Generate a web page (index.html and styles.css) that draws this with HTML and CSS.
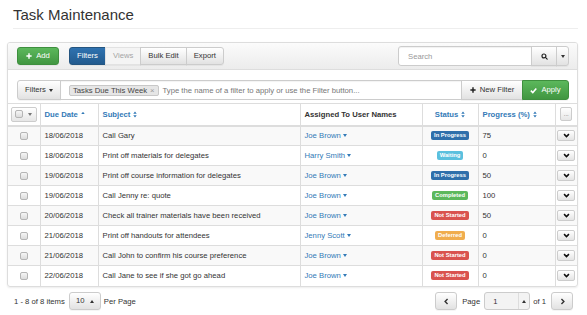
FILE: index.html
```html
<!DOCTYPE html>
<html>
<head>
<meta charset="utf-8">
<title>Task Maintenance</title>
<link rel="stylesheet" href="styles.css">
</head>
<body>
<div class="page">
  <div class="page-header"><h1>Task Maintenance</h1></div>

  <div class="panel">
    <div class="toolbar">
      <button class="btn btn-success btn-add"><svg class="ico-plus" viewBox="0 0 10 10"><path d="M3.8 0.6h2.4v3.2h3.2v2.4H6.2v3.2H3.8V6.2H0.6V3.8h3.2z"/></svg>Add</button>
      <div class="btn-group">
        <button class="btn btn-primary">Filters</button>
        <button class="btn btn-muted">Views</button>
        <button class="btn btn-default">Bulk Edit</button>
        <button class="btn btn-default">Export</button>
      </div>
      <div class="spacer"></div>
      <div class="search">
        <div class="search-input">Search</div>
        <button class="btn btn-default btn-search"><svg class="ico-search" viewBox="0 0 10 10"><circle cx="4.2" cy="4.2" r="2.8"/><path d="M6.3 6.3L8.8 8.8"/></svg></button>
        <button class="btn btn-default btn-caret"><span class="caret"></span></button>
      </div>
    </div>

    <div class="filter-row">
      <button class="btn btn-default btn-filters">Filters<span class="caret"></span></button>
      <div class="filter-input">
        <span class="tag">Tasks Due This Week<span class="tag-x">×</span></span>
        <span class="placeholder">Type the name of a filter to apply or use the Filter button...</span>
      </div>
      <button class="btn btn-default btn-new"><svg class="ico-plus dark" viewBox="0 0 10 10"><path d="M3.8 0.6h2.4v3.2h3.2v2.4H6.2v3.2H3.8V6.2H0.6V3.8h3.2z"/></svg>New Filter</button>
      <button class="btn btn-success btn-apply"><svg class="ico-check" viewBox="0 0 10 10"><path d="M1.2 5.2L4 8L9 2.2"/></svg>Apply</button>
    </div>

    <table class="grid">
      <colgroup>
        <col class="c-chk"><col class="c-date"><col class="c-subj"><col class="c-user"><col class="c-status"><col class="c-prog"><col class="c-act">
      </colgroup>
      <thead>
        <tr>
          <th class="t-chk"><span class="chk-btn"><span class="chk"></span><span class="caret gray"></span></span></th>
          <th><span class="sort">Due Date<svg class="ico-sort" viewBox="0 0 6 10"><path d="M3 1L5.6 4.4H0.4Z"/></svg></span></th>
          <th><span class="sort">Subject<svg class="ico-sort" viewBox="0 0 6 10"><path d="M3 0.6L5.6 4H0.4ZM3 9.4L5.6 6H0.4Z"/></svg></span></th>
          <th>Assigned To User Names</th>
          <th class="center"><span class="sort">Status<svg class="ico-sort" viewBox="0 0 6 10"><path d="M3 0.6L5.6 4H0.4ZM3 9.4L5.6 6H0.4Z"/></svg></span></th>
          <th><span class="sort">Progress (%)<svg class="ico-sort" viewBox="0 0 6 10"><path d="M3 0.6L5.6 4H0.4ZM3 9.4L5.6 6H0.4Z"/></svg></span></th>
          <th class="t-act"><span class="more-btn">...</span></th>
        </tr>
      </thead>
      <tbody>
        <tr>
          <td class="t-chk"><span class="chk"></span></td><td>18/06/2018</td><td>Call Gary</td>
          <td><span class="user">Joe Brown<span class="caret blue"></span></span></td>
          <td class="center"><span class="badge b-primary">In Progress</span></td><td>75</td>
          <td class="t-act"><span class="act-btn"><svg class="ico-chev" viewBox="0 0 10 7"><path d="M1.5 1.5L5 5L8.5 1.5"/></svg></span></td>
        </tr>
        <tr>
          <td class="t-chk"><span class="chk"></span></td><td>18/06/2018</td><td>Print off materials for delegates</td>
          <td><span class="user">Harry Smith<span class="caret blue"></span></span></td>
          <td class="center"><span class="badge b-info">Waiting</span></td><td>0</td>
          <td class="t-act"><span class="act-btn"><svg class="ico-chev" viewBox="0 0 10 7"><path d="M1.5 1.5L5 5L8.5 1.5"/></svg></span></td>
        </tr>
        <tr>
          <td class="t-chk"><span class="chk"></span></td><td>19/06/2018</td><td>Print off course information for delegates</td>
          <td><span class="user">Joe Brown<span class="caret blue"></span></span></td>
          <td class="center"><span class="badge b-primary">In Progress</span></td><td>50</td>
          <td class="t-act"><span class="act-btn"><svg class="ico-chev" viewBox="0 0 10 7"><path d="M1.5 1.5L5 5L8.5 1.5"/></svg></span></td>
        </tr>
        <tr>
          <td class="t-chk"><span class="chk"></span></td><td>19/06/2018</td><td>Call Jenny re: quote</td>
          <td><span class="user">Joe Brown<span class="caret blue"></span></span></td>
          <td class="center"><span class="badge b-success">Completed</span></td><td>100</td>
          <td class="t-act"><span class="act-btn"><svg class="ico-chev" viewBox="0 0 10 7"><path d="M1.5 1.5L5 5L8.5 1.5"/></svg></span></td>
        </tr>
        <tr>
          <td class="t-chk"><span class="chk"></span></td><td>20/06/2018</td><td>Check all trainer materials have been received</td>
          <td><span class="user">Joe Brown<span class="caret blue"></span></span></td>
          <td class="center"><span class="badge b-danger">Not Started</span></td><td>50</td>
          <td class="t-act"><span class="act-btn"><svg class="ico-chev" viewBox="0 0 10 7"><path d="M1.5 1.5L5 5L8.5 1.5"/></svg></span></td>
        </tr>
        <tr>
          <td class="t-chk"><span class="chk"></span></td><td>21/06/2018</td><td>Print off handouts for attendees</td>
          <td><span class="user">Jenny Scott<span class="caret blue"></span></span></td>
          <td class="center"><span class="badge b-warning">Deferred</span></td><td>0</td>
          <td class="t-act"><span class="act-btn"><svg class="ico-chev" viewBox="0 0 10 7"><path d="M1.5 1.5L5 5L8.5 1.5"/></svg></span></td>
        </tr>
        <tr>
          <td class="t-chk"><span class="chk"></span></td><td>21/06/2018</td><td>Call John to confirm his course preference</td>
          <td><span class="user">Joe Brown<span class="caret blue"></span></span></td>
          <td class="center"><span class="badge b-danger">Not Started</span></td><td>0</td>
          <td class="t-act"><span class="act-btn"><svg class="ico-chev" viewBox="0 0 10 7"><path d="M1.5 1.5L5 5L8.5 1.5"/></svg></span></td>
        </tr>
        <tr>
          <td class="t-chk"><span class="chk"></span></td><td>22/06/2018</td><td>Call Jane to see if she got go ahead</td>
          <td><span class="user">Joe Brown<span class="caret blue"></span></span></td>
          <td class="center"><span class="badge b-danger">Not Started</span></td><td>0</td>
          <td class="t-act"><span class="act-btn"><svg class="ico-chev" viewBox="0 0 10 7"><path d="M1.5 1.5L5 5L8.5 1.5"/></svg></span></td>
        </tr>
      </tbody>
    </table>
  </div>

  <div class="pager">
    <span class="items">1 - 8 of 8 items</span>
    <button class="btn btn-default btn-size">10<span class="caret up"></span></button>
    <span class="per">Per Page</span>
    <div class="spacer"></div>
    <button class="btn btn-default btn-nav"><svg class="ico-nav" viewBox="0 0 8 8"><path d="M5.2 1.2L2.4 4L5.2 6.8"/></svg></button>
    <span class="page-lbl">Page</span>
    <div class="page-input"><span class="page-num">1</span><span class="spin"><span class="caret up"></span></span></div>
    <span class="of">of 1</span>
    <button class="btn btn-default btn-nav"><svg class="ico-nav" viewBox="0 0 8 8"><path d="M2.8 1.2L5.6 4L2.8 6.8"/></svg></button>
  </div>
</div>
</body>
</html>
```

FILE: styles.css
```css
* { box-sizing: border-box; }

body {
  margin: 0;
  background: #fff;
  color: #333;
  font-family: "Liberation Sans", Arial, sans-serif;
  font-size: 7.7px;
}

.page {
  padding: 0 9px 0 7px;
}

.page-header {
  margin-left: 6px;
  padding: 6px 0 5px;
  border-bottom: 1px solid #eee;
}

.page-header h1 {
  margin: 0;
  font-size: 15px;
  line-height: 17px;
  font-weight: normal;
  color: #333;
}

.panel {
  margin-top: 13px;
  border: 1px solid #ddd;
  border-radius: 3px;
  box-shadow: 0 1px 2px rgba(0,0,0,0.08);
  overflow: hidden;
}

.toolbar {
  display: flex;
  align-items: center;
  height: 27px;
  padding: 0 8px 0 9px;
  background: linear-gradient(#fbfbfb, #ececec);
  border-bottom: 1px solid #ddd;
}

.spacer { flex: 1; }

.btn {
  display: inline-flex;
  align-items: center;
  justify-content: center;
  height: 18px;
  padding: 0 7px;
  margin: 0;
  border: 1px solid #ccc;
  border-radius: 3px;
  font-family: inherit;
  font-size: 7.7px;
  line-height: 1;
  white-space: nowrap;
  color: #333;
  background: linear-gradient(#ffffff, #e2e2e2);
  box-shadow: 0 1px 0 rgba(0,0,0,0.04);
}

.btn-success {
  color: #fff;
  border-color: #3e8f3e;
  background: linear-gradient(#5cb85c, #419641);
}

.btn-primary {
  color: #fff;
  border-color: #245580;
  background: linear-gradient(#2f72b0, #225a8e);
}

.btn-muted {
  color: #a5a5a5;
  border-color: #e2e2e2;
  background: #f4f4f4;
}

.btn-add {
  width: 42px;
  gap: 4px;
}

.ico-plus {
  width: 6px;
  height: 6px;
  fill: #fff;
  flex: none;
}
.ico-plus.dark { fill: #222; }

.btn-group {
  display: flex;
  margin-left: 10px;
}
.btn-group .btn {
  border-radius: 0;
  margin-left: -1px;
}
.btn-group .btn:first-child {
  margin-left: 0;
  border-radius: 3px 0 0 3px;
}
.btn-group .btn:last-child {
  border-radius: 0 3px 3px 0;
}

.search {
  display: flex;
  height: 20px;
}
.search-input {
  width: 134px;
  height: 20px;
  padding-left: 9px;
  display: flex;
  align-items: center;
  border: 1px solid #ccc;
  border-radius: 3px 0 0 3px;
  background: #fff;
  color: #999;
  box-shadow: inset 0 1px 1px rgba(0,0,0,0.06);
}
.search .btn {
  height: 20px;
  border-radius: 0;
  margin-left: -1px;
  padding: 0;
}
.btn-search { width: 26px; }
.search .btn-caret {
  width: 13px;
  border-radius: 0 3px 3px 0;
}

.ico-search {
  width: 7px;
  height: 7px;
  fill: none;
  stroke: #222;
  stroke-width: 1.7;
  stroke-linecap: round;
}

.caret {
  display: inline-block;
  width: 0;
  height: 0;
  border-top: 3px solid #333;
  border-left: 2.5px solid transparent;
  border-right: 2.5px solid transparent;
}
.caret.up {
  border-top: 0;
  border-bottom: 3px solid #333;
}
.caret.gray { border-top-color: #777; }
.caret.blue { border-top-color: #337ab7; margin-left: 2px; }

.filter-row {
  display: flex;
  height: 33px;
  padding: 10px 8px 0 9px;
  background: #fff;
}
.filter-row .btn,
.filter-input {
  height: 20px;
}
.btn-filters {
  width: 44px;
  gap: 3px;
  border-radius: 3px 0 0 3px;
}
.filter-input {
  flex: 1;
  min-width: 0;
  display: flex;
  align-items: center;
  margin-left: -1px;
  padding-left: 8px;
  border: 1px solid #ccc;
  background: #fff;
  overflow: hidden;
  white-space: nowrap;
  box-shadow: inset 0 1px 1px rgba(0,0,0,0.05);
}
.tag {
  display: inline-flex;
  align-items: center;
  height: 11px;
  padding: 0 3px;
  border: 1px solid #c8c8c8;
  border-radius: 2px;
  background: #e6e6e6;
  color: #444;
}
.tag-x {
  margin-left: 3px;
  color: #999;
}
.placeholder {
  margin-left: 4px;
  color: #777;
}
.btn-new {
  flex: none;
  width: 62px;
  gap: 4px;
  padding: 0;
  margin-left: -1px;
  border-radius: 0;
}
.btn-apply {
  flex: none;
  width: 47px;
  gap: 4px;
  padding: 0;
  margin-left: -1px;
  border-radius: 0 3px 3px 0;
}
.ico-check {
  width: 7px;
  height: 7px;
  fill: none;
  stroke: #fff;
  stroke-width: 2.2;
}

.grid {
  width: 100%;
  table-layout: fixed;
  border-collapse: collapse;
  border-top: 1px solid #ddd;
}
.c-chk { width: 32px; }
.c-date { width: 58px; }
.c-subj { width: 202px; }
.c-user { width: 122px; }
.c-status { width: 56px; }
.c-prog { width: 77px; }
.c-act { width: 22px; }

.grid th,
.grid td {
  padding: 0 4px;
  border-left: 1px solid #ddd;
  border-bottom: 1px solid #ddd;
  text-align: left;
  white-space: nowrap;
  overflow: hidden;
  vertical-align: middle;
}
.grid th:first-child,
.grid td:first-child { border-left: 0; }
.grid tbody tr:last-child td { border-bottom: 0; }

.grid th {
  height: 22px;
  font-weight: bold;
  color: #333;
  background: #fff;
  border-bottom: 2px solid #ddd;
}
.grid td { height: 20px; }
.grid tbody tr:nth-child(odd) td { background: #f9f9f9; }

.grid .center { text-align: center; }
.grid .t-chk { text-align: center; padding: 0; }
.grid .t-act { text-align: center; padding: 0; overflow: visible; }

.sort {
  display: inline-flex;
  align-items: center;
  gap: 3px;
  color: #337ab7;
}
.ico-sort {
  width: 4px;
  height: 7px;
  fill: #337ab7;
}

.chk-btn {
  display: inline-flex;
  align-items: center;
  gap: 5px;
  width: 26px;
  height: 15px;
  padding-left: 3px;
  border: 1px solid #ccc;
  border-radius: 2px;
  background: linear-gradient(#fff, #e6e6e6);
  vertical-align: middle;
}
.chk {
  display: inline-block;
  width: 8px;
  height: 8px;
  border: 1px solid #b5b5b5;
  border-radius: 2px;
  background: linear-gradient(#f6f6f6, #dcdcdc);
  vertical-align: middle;
}

.more-btn {
  display: inline-flex;
  align-items: center;
  justify-content: center;
  width: 12px;
  height: 14px;
  border: 1px solid #ccc;
  border-radius: 2px;
  background: linear-gradient(#fff, #e6e6e6);
  color: #666;
  font-size: 6px;
  font-weight: normal;
  vertical-align: middle;
}

.user {
  color: #337ab7;
  display: inline-flex;
  align-items: center;
}

.badge {
  display: inline-block;
  height: 9px;
  line-height: 9px;
  padding: 0 3px;
  border-radius: 2px;
  font-size: 5.8px;
  font-weight: bold;
  color: #fff;
  vertical-align: middle;
}
.b-primary { background: #2f6fab; }
.b-info { background: #5bc0de; }
.b-success { background: #5cb85c; }
.b-danger { background: #d9534f; }
.b-warning { background: #f0ad4e; }

.act-btn {
  display: inline-flex;
  align-items: center;
  justify-content: center;
  width: 18px;
  height: 11px;
  border: 1px solid #ccc;
  border-radius: 2px;
  background: linear-gradient(#fff, #e4e4e4);
  vertical-align: middle;
}
.ico-chev {
  width: 7px;
  height: 5px;
  fill: none;
  stroke: #111;
  stroke-width: 2.2;
}

.pager {
  display: flex;
  align-items: center;
  height: 29px;
  padding: 0 5px 0 7px;
}
.items { margin-right: 4px; }
.btn-size {
  width: 32px;
  gap: 5px;
  padding: 0;
}
.per { margin-left: 3px; }

.btn-nav {
  width: 22px;
  padding: 0;
}
.ico-nav {
  width: 7px;
  height: 7px;
  fill: none;
  stroke: #333;
  stroke-width: 1.6;
}
.page-lbl { margin: 0 4px 0 5px; }
.page-input {
  display: flex;
  height: 18px;
  border: 1px solid #ccc;
  border-radius: 3px;
  background: #f3f3f3;
}
.page-num {
  width: 33px;
  padding-left: 8px;
  display: flex;
  align-items: center;
}
.spin {
  width: 11px;
  display: flex;
  align-items: center;
  justify-content: center;
  border-left: 1px solid #ddd;
}
.of { margin: 0 5px 0 3px; }
```
